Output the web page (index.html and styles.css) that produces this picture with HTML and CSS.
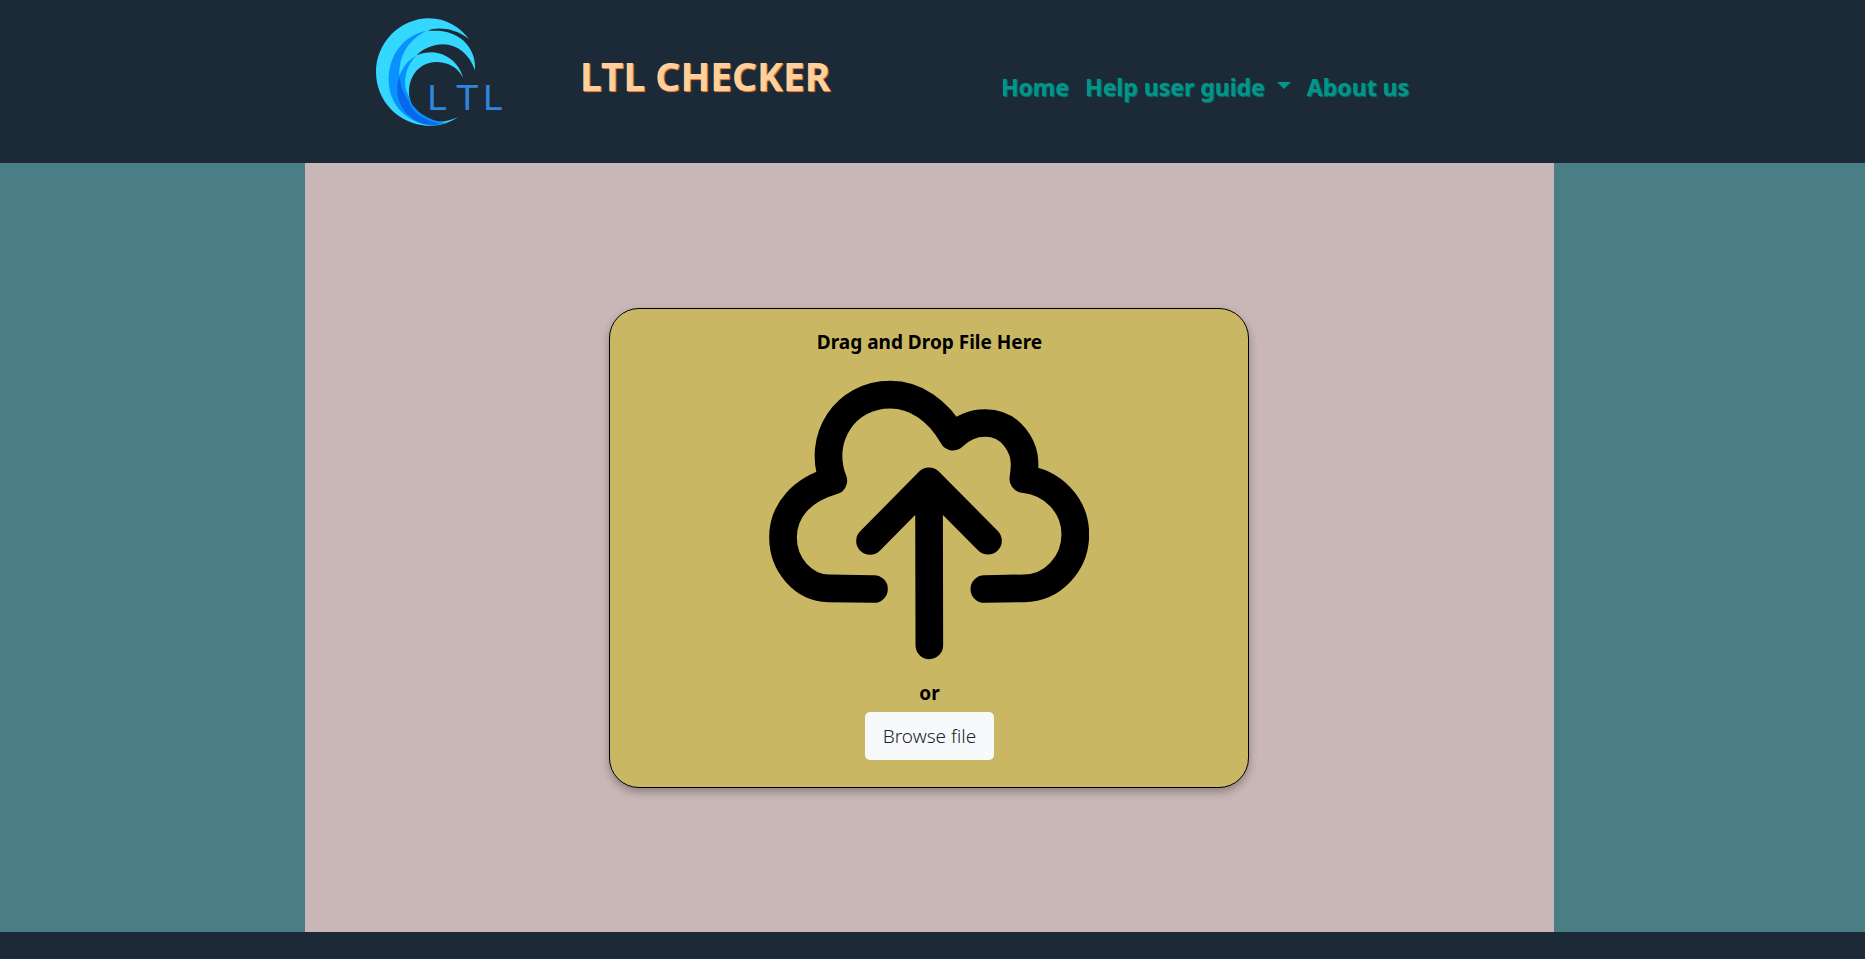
FILE: index.html
```html
<!DOCTYPE html>
<html lang="en">
<head>
<meta charset="utf-8">
<title>LTL Checker</title>
<link rel="stylesheet" href="styles.css">
</head>
<body>
<header class="site-header">
  <div class="header-inner">
    <a class="logo" href="#" aria-label="LTL home">
      <svg viewBox="0 0 480 480" width="160" height="160">
        <path fill="#34d8ff" d="M327 117C300 82 258 55 208 55C120 55 48 128 48 216C48 302 115 372 200 377C235 379 268 369 294 351C262 367 225 370 198 358C165 342 147 305 147 278C147 225 180 187 228 186C262 186 292 200 309 233C299 192 262 159 216 157C200 157 184 160 170 166C190 145 220 133 250 133C292 134 328 162 345 211C350 150 306 96 235 92L204 92C225 80 285 82 327 117Z"/>
        <path fill="#0891ff" d="M200 92C130 106 86 165 86 240C86 305 130 365 210 376C235 376 250 371 262 368C200 365 149 320 148 290C128 262 130 205 170 166C145 180 125 205 118 230C116 165 145 120 200 92Z"/>
        <path fill="#0667e8" d="M118 228C101 280 118 345 185 370C205 376 228 375 240 371C190 360 155 335 147 305C131 285 122 258 118 228Z"/>
        <text class="logo-text" x="201 290 368" y="331">LTL</text>
      </svg>
    </a>
    <h1 class="title">LTL CHECKER</h1>
    <nav class="nav">
      <a href="#">Home</a>
      <a class="dropdown" href="#">Help user guide</a>
      <a href="#">About us</a>
    </nav>
  </div>
</header>
<main class="main">
  <section class="panel">
    <form class="drop-card">
      <h2 class="drop-title">Drag and Drop File Here</h2>
      <svg class="cloud" viewBox="57 57 960 843" fill="none" stroke="#000" stroke-width="83" stroke-linecap="round" stroke-linejoin="round" aria-hidden="true">
        <path d="M372 687L235 685C160 683 99 615 99 532C99 452 155 389 250 362C200 235 285 104 421 104C495 104 565 150 609 230C665 175 750 175 795 232C825 270 828 307 820 357C910 366 976 438 976 523C976 611 908 684 822 685L703 687"/>
        <path d="M538 856L537 364M360 543L537 364L714 542"/>
      </svg>
      <span class="or">or</span>
      <button class="browse" type="button">Browse file</button>
    </form>
  </section>
</main>
</body>
</html>
```
FILE: styles.css
```css
* { box-sizing: border-box; }

body {
  margin: 0;
  min-height: 100vh;
  display: flex;
  flex-direction: column;
  background: #1c2936;
  font-family: "Segoe UI", "Noto Sans", "Open Sans", sans-serif;
  color: #000;
}

.site-header { padding: 0 6px 3px 0; }

.header-inner {
  display: flex;
  align-items: flex-start;
  width: 67.2%;
  margin: 0 auto;
  padding-left: 55px;
}

.logo { width: 160px; height: 160px; }
.logo svg { display: block; }

.logo-text {
  font-family: "DejaVu Sans", sans-serif;
  font-size: 103px;
  fill: #2f86dc;
}

.title {
  margin: 48px 0 0 60px;
  font-size: 39px;
  line-height: 56px;
  font-weight: 700;
  color: #ffd09b;
  text-shadow: 1px 1px 1px #ff7f32;
  white-space: nowrap;
}

.nav {
  display: flex;
  gap: 16px;
  margin: 69px 0 0 auto;
  padding-right: 145px;
  white-space: nowrap;
}

.nav a {
  color: #009688;
  font-size: 23px;
  line-height: 36px;
  font-weight: 700;
  text-decoration: none;
  text-shadow: 1px 1px 1px #087a72;
}

.dropdown::after {
  content: "";
  display: inline-block;
  margin-left: 12px;
  vertical-align: 7px;
  border-top: 7px solid;
  border-left: 7px solid transparent;
  border-right: 7px solid transparent;
}

.main {
  flex: 1;
  display: flex;
  justify-content: center;
  margin-bottom: 27px;
  padding-right: 6px;
  background: #4a7e87;
}

.panel {
  display: flex;
  align-items: center;
  justify-content: center;
  width: 67.2%;
  background: #c9b7b7;
}

.drop-card {
  display: flex;
  flex-direction: column;
  align-items: center;
  width: 640px;
  padding: 19px 24px 27px;
  border: 1px solid #000;
  border-radius: 30px;
  background: #c9b763;
  box-shadow: 0 4px 8px rgba(0, 0, 0, 0.3);
}

.drop-title, .or {
  margin: 0;
  font-size: 19px;
  line-height: 28px;
  font-weight: 700;
}

.cloud { width: 320px; margin: 23px 0 19px; }

.browse {
  margin-top: 5px;
  padding: 0 18px;
  border: 0;
  border-radius: 5px;
  background: #f8f9fb;
  color: #212529;
  font: 300 19px/48px "Segoe UI", "Noto Sans", "Open Sans", sans-serif;
}
```
